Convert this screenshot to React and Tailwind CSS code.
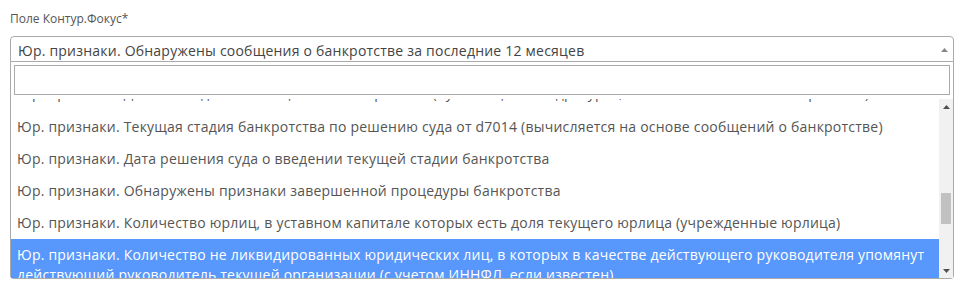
import React from "react";

const items = [
  "Юр. признаки. Дата последнего сообщения о банкротстве (публикация в Федресурсе, ЕФРСБ или газете «Коммерсантъ»)",
  "Юр. признаки. Текущая стадия банкротства по решению суда от d7014 (вычисляется на основе сообщений о банкротстве)",
  "Юр. признаки. Дата решения суда о введении текущей стадии банкротства",
  "Юр. признаки. Обнаружены признаки завершенной процедуры банкротства",
  "Юр. признаки. Количество юрлиц, в уставном капитале которых есть доля текущего юрлица (учрежденные юрлица)",
];

const highlighted =
  "Юр. признаки. Количество не ликвидированных юридических лиц, в которых в качестве действующего руководителя упомянут действующий руководитель текущей организации (с учетом ИННФЛ, если известен)";

export default function App() {
  return (
    <div
      className="w-[967px] h-[284px] bg-white overflow-hidden pt-[10px] px-[10px]"
      style={{ fontFamily: '"Open Sans", "Liberation Sans", sans-serif' }}
    >
      <div className="text-[12px] leading-[17px] text-[#555] mb-[9px]">Поле Контур.Фокус*</div>
      <div className="w-[944px]">
        <div className="h-[26px] border border-[#aaa] rounded-t-[4px] flex items-start justify-between pl-[7px] pr-[5px]">
          <span className="text-[14px] leading-[28px] tracking-[0.22px] text-[#444] whitespace-nowrap">
            Юр. признаки. Обнаружены сообщения о банкротстве за последние 12 месяцев
          </span>
          <svg width="7" height="4" className="mt-[11px]" viewBox="0 0 7 4">
            <path d="M0 4 L3.5 0 L7 4 Z" fill="#888" />
          </svg>
        </div>
        <div className="border border-t-0 border-[#aaa] rounded-b-[4px] pt-[3px]">
          <div className="px-[3px]">
            <div className="h-[30px] border border-[#aaa] w-full"></div>
          </div>
          <div className="mt-[4px] h-[179px] flex">
            <div className="flex-1 overflow-hidden">
              <div className="-mt-[22px]">
                {items.map((t, i) => (
                  <div
                    key={i}
                    className={
                      i === 0
                        ? "px-[6px] pt-[6px] pb-[8px] text-[14px] leading-[20px] tracking-[0.22px] text-[#555] whitespace-nowrap"
                        : "px-[6px] py-[6px] text-[14px] leading-[20px] tracking-[0.22px] text-[#555] whitespace-nowrap"
                    }
                  >
                    {t}
                  </div>
                ))}
                <div className="px-[6px] py-[6px] text-[14px] leading-[20px] tracking-[0.22px] text-white bg-[#5897fb]">
                  {highlighted}
                </div>
              </div>
            </div>
            <div className="w-[14px] bg-[#f1f1f1] flex flex-col">
              <div className="h-[15px] flex items-center justify-center">
                <svg width="7" height="4" viewBox="0 0 7 4">
                  <path d="M0 4 L3.5 0 L7 4 Z" fill="#505050" />
                </svg>
              </div>
              <div className="flex-1">
                <div className="mt-[79px] ml-[2px] w-[10px] h-[31px] bg-[#c1c1c1]"></div>
              </div>
              <div className="h-[15px] flex items-center justify-center">
                <svg width="7" height="4" viewBox="0 0 7 4">
                  <path d="M0 0 L3.5 4 L7 0 Z" fill="#505050" />
                </svg>
              </div>
            </div>
          </div>
        </div>
      </div>
    </div>
  );
}
